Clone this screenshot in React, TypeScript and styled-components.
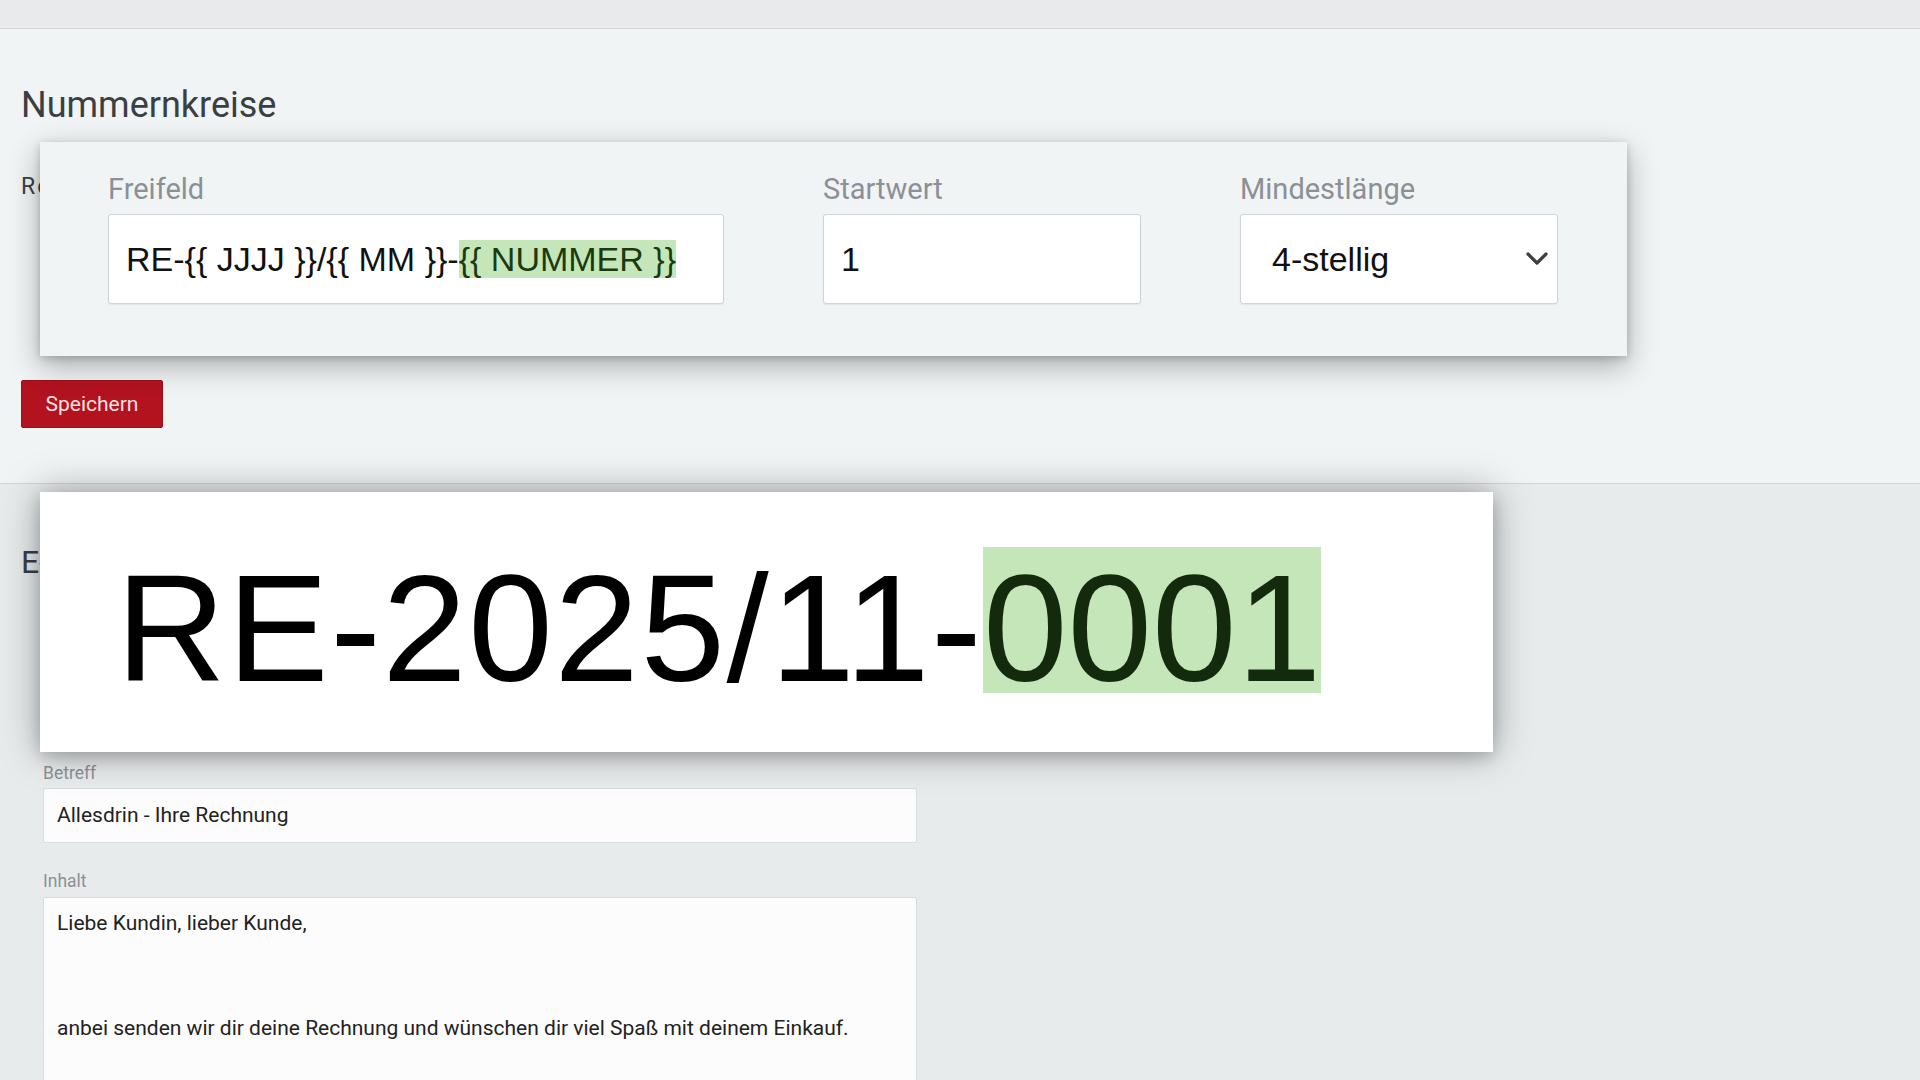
import React from 'react';
import styled, { createGlobalStyle } from 'styled-components';

const GlobalStyle = createGlobalStyle`
  html, body {
    margin: 0;
    padding: 0;
    background: #f1f4f5;
    font-family: Roboto, "Liberation Sans", Arial, sans-serif;
  }
  * { box-sizing: border-box; }
`;

const Page = styled.div`
  position: relative;
  width: 1920px;
  height: 1080px;
  overflow: hidden;
  background: #f1f4f5;
`;

const TopBar = styled.div`
  height: 29px;
  background: #e8eaeb;
  border-bottom: 1px solid #d3d8da;
`;

const SettingsSection = styled.section`
  padding: 55px 21px 55px;
  border-bottom: 1px solid #cfd6d8;
  background: #f1f4f5;
`;

const MailSection = styled.section`
  padding: 59px 21px 0;
  background: #e8ebec;
  height: 700px;
`;

const Heading = styled.h2<{ $size: number }>`
  margin: 0;
  font-size: ${p => p.$size}px;
  line-height: 1.2;
  font-weight: 400;
  color: #3a3f44;
`;

const SubHeading = styled.h3`
  margin: 45px 0 0;
  font-size: 23px;
  line-height: 30px;
  font-weight: 400;
  letter-spacing: 2px;
  color: #3a3f44;
`;

const SaveButton = styled.button`
  margin-top: 178px;
  height: 48px;
  width: 142px;
  border: 1px solid #a10f1a;
  border-radius: 2px;
  background: #b3121f;
  color: #fbe3e4;
  font-family: Roboto, sans-serif;
  font-size: 21px;
  cursor: pointer;
`;

const FormBlock = styled.div`
  margin-top: 181px;
  padding-left: 22px;
  width: 896px;
  display: flex;
  flex-direction: column;
`;

const SmallLabel = styled.label<{ $gap: number }>`
  margin-top: ${p => p.$gap}px;
  font-size: 17.5px;
  line-height: 20px;
  color: #8c9196;
`;

const TextInput = styled.div`
  margin-top: 5px;
  height: 55px;
  display: flex;
  align-items: center;
  padding-left: 13px;
  background: #fcfcfc;
  border: 1px solid #d6dbdd;
  border-radius: 2px;
  font-size: 21px;
  color: #222;
`;

const TextArea = styled.div`
  margin-top: 6px;
  height: 240px;
  padding: 8px 13px;
  background: #fcfcfc;
  border: 1px solid #d6dbdd;
  border-radius: 2px;
  font-size: 21px;
  color: #222;

  p {
    margin: 0;
    line-height: 35px;
    min-height: 35px;
  }
`;

/* zoomed overlay of the number format fields */
const FormatCard = styled.div`
  position: absolute;
  left: 40px;
  top: 142px;
  width: 1587px;
  height: 214px;
  padding: 30px 68px 52px;
  background: #f1f4f5;
  box-shadow: 0 10px 28px rgba(0, 0, 0, 0.3), 0 2px 8px rgba(0, 0, 0, 0.18);
  display: grid;
  grid-template-columns: 616px 318px 318px;
  column-gap: 99px;
`;

const Field = styled.div`
  display: flex;
  flex-direction: column;
  gap: 8px;
`;

const BigLabel = styled.span`
  font-size: 29px;
  line-height: 34px;
  color: #8b9095;
`;

const BigInput = styled.div<{ $pad: number }>`
  height: 90px;
  display: flex;
  align-items: center;
  justify-content: space-between;
  padding: 0 9px 0 ${p => p.$pad}px;
  background: #fff;
  border: 1px solid #cfd4d7;
  border-radius: 3px;
  box-shadow: 0 1px 2px rgba(0, 0, 0, 0.06);
  font-family: "Liberation Sans", Arial, sans-serif;
  font-size: 34px;
  color: #111;
  white-space: pre;
`;

const Mark = styled.span`
  background: #c5e6b9;
  color: #1b3a10;
`;

/* zoomed overlay of the resulting number */
const PreviewCard = styled.div`
  position: absolute;
  left: 40px;
  top: 492px;
  width: 1453px;
  height: 260px;
  padding: 60px 0 0 76px;
  background: #fff;
  box-shadow: 0 0 36px rgba(0, 0, 0, 0.35), 0 6px 14px rgba(0, 0, 0, 0.15);
`;

const BigNumber = styled.div`
  font-family: "Liberation Sans", Arial, sans-serif;
  font-size: 152px;
  line-height: 152px;
  color: #000;
  white-space: pre;
`;

const Prefix = styled.span`
  letter-spacing: 1.5px;
`;

const NumberMark = styled.span`
  color: #142a0d;
  background: linear-gradient(#c5e6b9, #c5e6b9) no-repeat;
  background-size: 100% 146px;
  background-position: 0 4px;
`;

const Chevron = () => (
  <svg width="22" height="14" viewBox="0 0 22 14" fill="none">
    <polyline points="2,2 11,11 20,2" stroke="#3c4043" strokeWidth="3.2" strokeLinecap="round" strokeLinejoin="round" />
  </svg>
);

export default function App() {
  return (
    <>
      <GlobalStyle />
      <Page>
        <TopBar />
        <SettingsSection>
          <Heading $size={36}>Nummernkreise</Heading>
          <SubHeading>Rechnungen</SubHeading>
          <SaveButton>Speichern</SaveButton>
        </SettingsSection>
        <MailSection>
          <Heading $size={32}>E-Mail-Vorlagen</Heading>
          <FormBlock>
            <SmallLabel $gap={0}>Betreff</SmallLabel>
            <TextInput>Allesdrin - Ihre Rechnung</TextInput>
            <SmallLabel $gap={28}>Inhalt</SmallLabel>
            <TextArea>
              <p>Liebe Kundin, lieber Kunde,</p>
              <p></p>
              <p></p>
              <p>anbei senden wir dir deine Rechnung und wünschen dir viel Spaß mit deinem Einkauf.</p>
            </TextArea>
          </FormBlock>
        </MailSection>

        <FormatCard>
          <Field>
            <BigLabel>Freifeld</BigLabel>
            <BigInput $pad={17}>
              <span>RE-{'{{'} JJJJ {'}}'}/{'{{'} MM {'}}'}-<Mark>{'{{'} NUMMER {'}}'}</Mark></span>
            </BigInput>
          </Field>
          <Field>
            <BigLabel>Startwert</BigLabel>
            <BigInput $pad={17}>
              <span>1</span>
            </BigInput>
          </Field>
          <Field>
            <BigLabel>Mindestlänge</BigLabel>
            <BigInput $pad={31}>
              <span>4-stellig</span>
              <Chevron />
            </BigInput>
          </Field>
        </FormatCard>

        <PreviewCard>
          <BigNumber><Prefix>RE-2025/11-</Prefix><NumberMark>0001</NumberMark></BigNumber>
        </PreviewCard>
      </Page>
    </>
  );
}
